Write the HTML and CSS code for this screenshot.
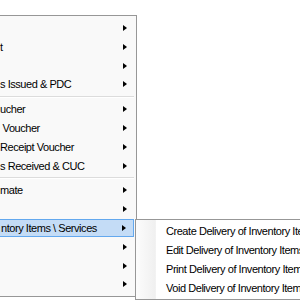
FILE: index.html
```html
<!DOCTYPE html>
<html>

<head>
    <title>Menu</title>
    <link rel="stylesheet" href="styles.css">
</head>

<body>
    <div class="menu">
        <div class="menu-item"><span class="label"></span><span class="arrow"></span></div>
        <div class="menu-item"><span class="label">t</span><span class="arrow"></span></div>
        <div class="menu-item"><span class="label"></span><span class="arrow"></span></div>
        <div class="menu-item"><span class="label">s Issued &amp; PDC</span><span class="arrow"></span></div>
        <div class="separator"></div>
        <div class="menu-item"><span class="label">ucher</span><span class="arrow"></span></div>
        <div class="menu-item"><span class="label">&nbsp;Voucher</span><span class="arrow"></span></div>
        <div class="menu-item"><span class="label">Receipt Voucher</span><span class="arrow"></span></div>
        <div class="menu-item"><span class="label">s Received &amp; CUC</span><span class="arrow"></span></div>
        <div class="separator"></div>
        <div class="menu-item"><span class="label">mate</span><span class="arrow"></span></div>
        <div class="menu-item"><span class="label"></span><span class="arrow"></span></div>
        <div class="menu-item active"><span class="label">ntory Items \ Services</span><span class="arrow"></span>
            <div class="submenu">
                <div class="submenu-item">Create Delivery of Inventory Items \ Services</div>
                <div class="submenu-item">Edit Delivery of Inventory Items \ Services</div>
                <div class="submenu-item">Print Delivery of Inventory Items \ Services</div>
                <div class="submenu-item">Void Delivery of Inventory Items \ Services</div>
            </div>
        </div>
        <div class="menu-item"><span class="label"></span><span class="arrow"></span></div>
        <div class="menu-item"><span class="label"></span><span class="arrow"></span></div>
        <div class="menu-item"><span class="label"></span><span class="arrow"></span></div>
    </div>
</body>

</html>
```

FILE: styles.css
```css
body {
    margin: 0;
    background-color: #fff;
    font-family: "Liberation Sans", Arial, sans-serif;
    font-size: 11px;
    letter-spacing: -0.45px;
    color: #000;
    overflow: hidden;
    height: 300px;
}

.menu {
    margin-top: 15px;
    margin-left: -3px;
    width: 138px;
    background-color: #f9f9f9;
    border: 1px solid #979797;
    padding: 2.6px 0;
}

.menu-item {
    position: relative;
    display: flex;
    align-items: center;
    height: 18.8px;
    padding: 0 0 0 2px;
    box-sizing: border-box;
}

.menu-item.active {
    background-color: #c4dcf6;
    border: 1px solid #63a8ee;
    margin-right: 2px;
}

.label {
    flex: 1;
    white-space: nowrap;
}

.arrow {
    width: 0;
    height: 0;
    margin-right: 9px;
    border-top: 3.5px solid transparent;
    border-bottom: 3.5px solid transparent;
    border-left: 4px solid #000;
}

.menu-item.active .arrow {
    margin-right: 7px;
}

.separator {
    height: 6px;
    display: flex;
    align-items: center;
}

.separator::before {
    content: "";
    flex: 1;
    height: 1px;
    background-color: #dcdcdc;
    border-bottom: 1px solid #fff;
    margin-right: 2px;
}

/* popup lies over the page, to the right of the active item */
.submenu {
    position: absolute;
    left: 136px;
    top: -1px;
    width: 200px;
    padding: 2px 0 1px 0;
    background: linear-gradient(to right, #fcfcfc 0, #f0f0f0 19px, #e6e6e6 19px, #fff 20px, #fff 100%);
    border: 1px solid #979797;
    box-shadow: 2px 2px 2px rgba(0, 0, 0, 0.15);
}

.submenu-item {
    height: 19px;
    line-height: 19px;
    padding-left: 30px;
    white-space: nowrap;
}
```
